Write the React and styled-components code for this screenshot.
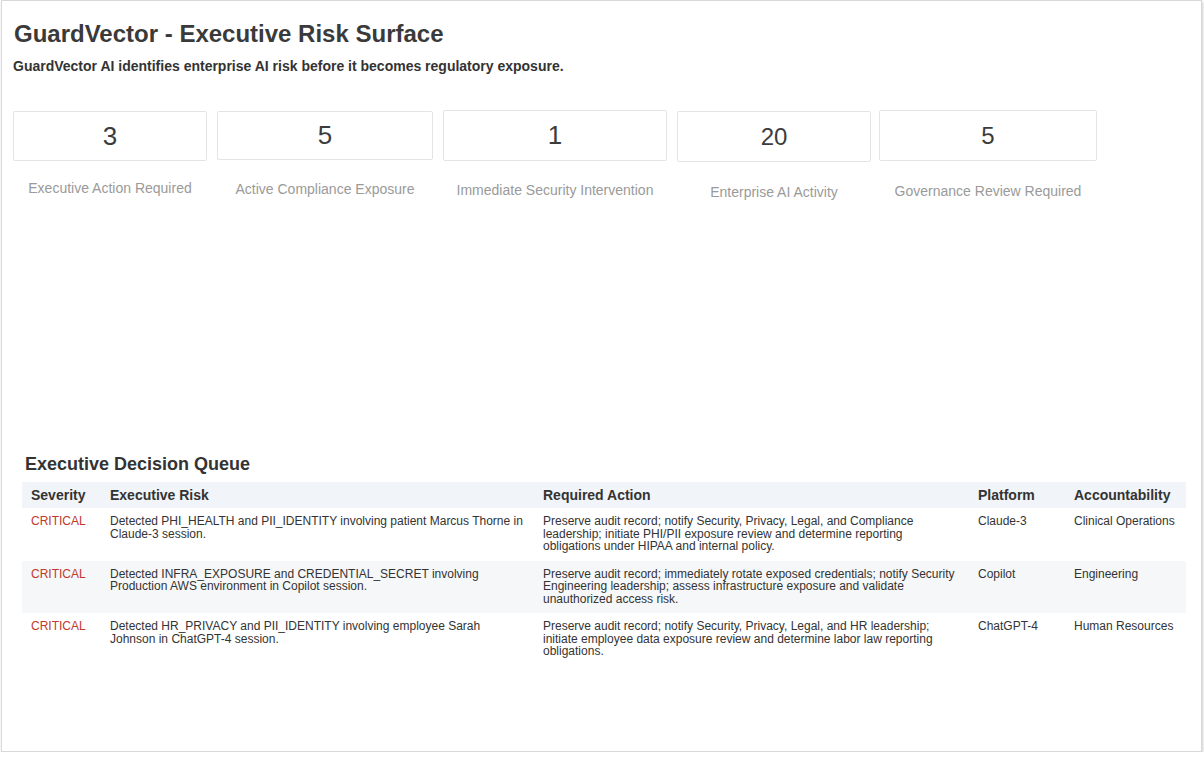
import React from "react";
import styled, { createGlobalStyle } from "styled-components";

const Global = createGlobalStyle`
  html, body { margin: 0; padding: 0; background: #fff; }
  body { font-family: "Liberation Sans", Arial, sans-serif; color: #333; }
`;

const Frame = styled.div`
  box-sizing: border-box;
  width: 1201px;
  height: 752px;
  margin-left: 1px;
  border: 1px solid #d8d8d8;
  box-shadow: 1px 2px 3px rgba(0,0,0,0.2);
  padding: 19px 0 0 11px;
`;
const Title = styled.h1`
  margin: 0 0 0 1px;
  font-size: 24px;
  font-weight: bold;
  color: #3a3a3a;
  line-height: 28px;
`;
const Sub = styled.p`
  margin: 10px 0 0 0;
  font-size: 14px;
  font-weight: bold;
  color: #333;
`;
const Metrics = styled.div`
  display: flex;
  margin-top: 36px;
  align-items: flex-start;
`;
const Metric = styled.div`
  display: flex;
  flex-direction: column;
  align-items: center;
  width: ${p => p.$w}px;
  margin-right: ${p => p.$gap}px;
  margin-top: ${p => p.$top}px;
`;
const Card = styled.div`
  box-sizing: border-box;
  width: 100%;
  height: ${p => p.$h}px;
  border: 1px solid #e4e4e4;
  border-radius: 2px;
  display: flex;
  align-items: center;
  justify-content: center;
  font-size: 26px;
  color: #3c3c3c;
  ${p => p.$small ? "font-size: 24px;" : ""}
`;
const Label = styled.div`
  margin-top: ${p => p.$mt}px;
  font-size: 14px;
  color: #9a9a9a;
`;
const Queue = styled.div`
  margin: 254px 0 0 9px;
  width: 1164px;
`;
const QTitle = styled.h2`
  margin: 0 0 7px 3px;
  font-size: 18px;
  font-weight: bold;
  color: #333;
`;
const Table = styled.table`
  width: 100%;
  border-collapse: collapse;
  table-layout: fixed;
  font-size: 12px;
`;
const Th = styled.th`
  text-align: left;
  font-size: 14px;
  font-weight: bold;
  color: #333;
  background: #f1f4f8;
  padding: 5px 9px 5px 9px;
  height: 16px;
`;
const Row = styled.tr`
  background: ${p => (p.$alt ? "#f6f7f9" : "#fff")};
`;
const Td = styled.td`
  vertical-align: top;
  padding: 7px 9px 8px 9px;
  line-height: 12.5px;
  color: ${p => (p.$crit ? "#c0392b" : "#333")};
  height: 37px;
`;

const metrics = [
  { v: 3, l: "Executive Action Required", w: 194, gap: 10, top: 1, h: 50, mt: 19 },
  { v: 5, l: "Active Compliance Exposure", w: 216, gap: 10, top: 1, h: 49, mt: 21 },
  { v: 1, l: "Immediate Security Intervention", w: 224, gap: 10, top: 0, h: 51, mt: 21 },
  { v: 20, l: "Enterprise AI Activity", w: 194, gap: 8, top: 1, h: 51, mt: 22, small: true },
  { v: 5, l: "Governance Review Required", w: 218, gap: 0, top: 0, h: 51, mt: 22, small: true },
];

const rows = [
  ["Detected PHI_HEALTH and PII_IDENTITY involving patient Marcus Thorne in Claude-3 session.",
   "Preserve audit record; notify Security, Privacy, Legal, and Compliance leadership; initiate PHI/PII exposure review and determine reporting obligations under HIPAA and internal policy.",
   "Claude-3", "Clinical Operations"],
  ["Detected INFRA_EXPOSURE and CREDENTIAL_SECRET involving Production AWS environment in Copilot session.",
   "Preserve audit record; immediately rotate exposed credentials; notify Security Engineering leadership; assess infrastructure exposure and validate unauthorized access risk.",
   "Copilot", "Engineering"],
  ["Detected HR_PRIVACY and PII_IDENTITY involving employee Sarah Johnson in ChatGPT-4 session.",
   "Preserve audit record; notify Security, Privacy, Legal, and HR leadership; initiate employee data exposure review and determine labor law reporting obligations.",
   "ChatGPT-4", "Human Resources"],
];

export default function App() {
  return (
    <>
      <Global />
      <Frame>
        <Title>GuardVector - Executive Risk Surface</Title>
        <Sub>GuardVector AI identifies enterprise AI risk before it becomes regulatory exposure.</Sub>
        <Metrics>
          {metrics.map((m, i) => (
            <Metric key={i} $w={m.w} $gap={m.gap} $top={m.top}>
              <Card $h={m.h} $small={m.small}>{m.v}</Card>
              <Label $mt={m.mt}>{m.l}</Label>
            </Metric>
          ))}
        </Metrics>
        <Queue>
          <QTitle>Executive Decision Queue</QTitle>
          <Table>
            <colgroup>
              <col style={{ width: 79 }} />
              <col style={{ width: 433 }} />
              <col style={{ width: 435 }} />
              <col style={{ width: 96 }} />
              <col style={{ width: 121 }} />
            </colgroup>
            <thead>
              <tr>
                <Th>Severity</Th>
                <Th>Executive Risk</Th>
                <Th>Required Action</Th>
                <Th>Platform</Th>
                <Th>Accountability</Th>
              </tr>
            </thead>
            <tbody>
              {rows.map((r, i) => (
                <Row key={i} $alt={i === 1}>
                  <Td $crit>CRITICAL</Td>
                  <Td>{r[0]}</Td>
                  <Td>{r[1]}</Td>
                  <Td>{r[2]}</Td>
                  <Td>{r[3]}</Td>
                </Row>
              ))}
            </tbody>
          </Table>
        </Queue>
      </Frame>
    </>
  );
}
